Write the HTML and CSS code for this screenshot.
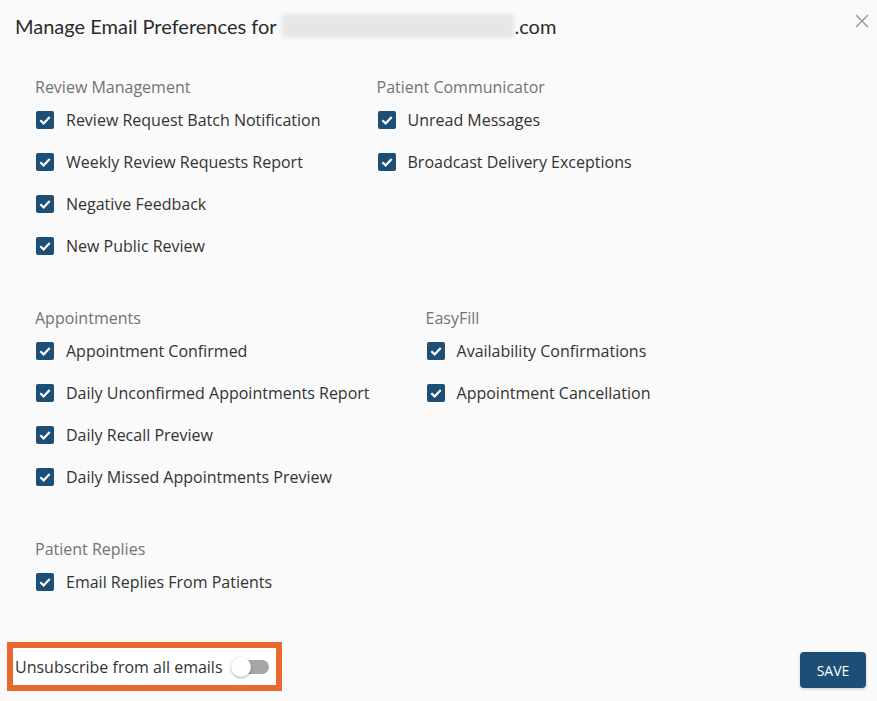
FILE: index.html
```html
<!DOCTYPE html>
<html>
<head>
<meta charset="utf-8">
<link rel="stylesheet" href="styles.css">
</head>
<body>
<div class="modal">
  <div class="modal-head">
    <h1 class="title">Manage Email Preferences for <span class="blur"></span>.com</h1>
    <button class="close" aria-label="Close">
      <svg width="16" height="16" viewBox="0 0 16 16"><path d="M2 2 L14 14 M14 2 L2 14" stroke="#9e9e9e" stroke-width="1.6" fill="none"/></svg>
    </button>
  </div>

  <div class="groups">
    <div class="row">
      <div class="group">
        <div class="group-title">Review Management</div>
        <label class="item"><span class="cb"><svg viewBox="0 0 18 18"><path d="M4.3 9.3 L7.6 12.4 L13.7 5.9" stroke="#fff" stroke-width="2.2" fill="none"/></svg></span>Review Request Batch Notification</label>
        <label class="item"><span class="cb"><svg viewBox="0 0 18 18"><path d="M4.3 9.3 L7.6 12.4 L13.7 5.9" stroke="#fff" stroke-width="2.2" fill="none"/></svg></span>Weekly Review Requests Report</label>
        <label class="item"><span class="cb"><svg viewBox="0 0 18 18"><path d="M4.3 9.3 L7.6 12.4 L13.7 5.9" stroke="#fff" stroke-width="2.2" fill="none"/></svg></span>Negative Feedback</label>
        <label class="item"><span class="cb"><svg viewBox="0 0 18 18"><path d="M4.3 9.3 L7.6 12.4 L13.7 5.9" stroke="#fff" stroke-width="2.2" fill="none"/></svg></span>New Public Review</label>
      </div>
      <div class="group">
        <div class="group-title">Patient Communicator</div>
        <label class="item"><span class="cb"><svg viewBox="0 0 18 18"><path d="M4.3 9.3 L7.6 12.4 L13.7 5.9" stroke="#fff" stroke-width="2.2" fill="none"/></svg></span>Unread Messages</label>
        <label class="item"><span class="cb"><svg viewBox="0 0 18 18"><path d="M4.3 9.3 L7.6 12.4 L13.7 5.9" stroke="#fff" stroke-width="2.2" fill="none"/></svg></span>Broadcast Delivery Exceptions</label>
      </div>
    </div>

    <div class="row">
      <div class="group">
        <div class="group-title">Appointments</div>
        <label class="item"><span class="cb"><svg viewBox="0 0 18 18"><path d="M4.3 9.3 L7.6 12.4 L13.7 5.9" stroke="#fff" stroke-width="2.2" fill="none"/></svg></span>Appointment Confirmed</label>
        <label class="item"><span class="cb"><svg viewBox="0 0 18 18"><path d="M4.3 9.3 L7.6 12.4 L13.7 5.9" stroke="#fff" stroke-width="2.2" fill="none"/></svg></span>Daily Unconfirmed Appointments Report</label>
        <label class="item"><span class="cb"><svg viewBox="0 0 18 18"><path d="M4.3 9.3 L7.6 12.4 L13.7 5.9" stroke="#fff" stroke-width="2.2" fill="none"/></svg></span>Daily Recall Preview</label>
        <label class="item"><span class="cb"><svg viewBox="0 0 18 18"><path d="M4.3 9.3 L7.6 12.4 L13.7 5.9" stroke="#fff" stroke-width="2.2" fill="none"/></svg></span>Daily Missed Appointments Preview</label>
      </div>
      <div class="group">
        <div class="group-title">EasyFill</div>
        <label class="item"><span class="cb"><svg viewBox="0 0 18 18"><path d="M4.3 9.3 L7.6 12.4 L13.7 5.9" stroke="#fff" stroke-width="2.2" fill="none"/></svg></span>Availability Confirmations</label>
        <label class="item"><span class="cb"><svg viewBox="0 0 18 18"><path d="M4.3 9.3 L7.6 12.4 L13.7 5.9" stroke="#fff" stroke-width="2.2" fill="none"/></svg></span>Appointment Cancellation</label>
      </div>
    </div>

    <div class="row">
      <div class="group">
        <div class="group-title">Patient Replies</div>
        <label class="item"><span class="cb"><svg viewBox="0 0 18 18"><path d="M4.3 9.3 L7.6 12.4 L13.7 5.9" stroke="#fff" stroke-width="2.2" fill="none"/></svg></span>Email Replies From Patients</label>
      </div>
    </div>
  </div>

  <div class="footer">
    <div class="unsub">
      <span>Unsubscribe from all emails</span>
      <span class="toggle"><span class="track"></span><span class="thumb"></span></span>
    </div>
    <button class="save">SAVE</button>
  </div>
</div>
</body>
</html>
```
FILE: styles.css
```css
* { box-sizing: border-box; }
html, body { margin: 0; padding: 0; }
body {
  background: #fafafa;
  font-family: "Open Sans", "Noto Sans", sans-serif;
  color: #333;
  width: 877px;
  height: 701px;
  overflow: hidden;
}
.modal {
  position: relative;
  height: 701px;
}
.modal-head {
  display: flex;
  justify-content: space-between;
  align-items: flex-start;
  padding: 13px 7px 0 15px;
  height: 76px;
}
.title {
  margin: 0;
  font-family: "Lato", sans-serif;
  font-weight: 400;
  font-size: 20px;
  line-height: 26px;
  color: #2b2b2b;
  display: flex;
  align-items: center;
}
.blur {
  display: inline-block;
  width: 232px;
  height: 24px;
  margin-left: 5px;
  margin-right: 1px;
  background: #e6e6e6;
  filter: blur(2px);
  border-radius: 3px;
}
.close {
  border: 0;
  background: transparent;
  padding: 0;
  margin-top: 0;
  width: 16px;
  height: 16px;
  cursor: pointer;
}
.groups {
  padding-left: 35px;
}
.row {
  display: flex;
  gap: 56px;
  margin-bottom: 40px;
}
.group {
  display: flex;
  flex-direction: column;
}
.group-title {
  font-size: 16px;
  line-height: 22px;
  color: #737373;
  margin-bottom: 1px;
}
.item {
  display: flex;
  align-items: center;
  height: 42px;
  font-size: 16px;
  color: #333;
  white-space: nowrap;
}
.cb {
  width: 18px;
  height: 18px;
  border-radius: 2px;
  background: #1d4f76;
  margin-left: 1px;
  margin-right: 12px;
  display: inline-flex;
}
.cb svg { width: 18px; height: 18px; }
.footer {
  position: absolute;
  left: 7px;
  right: 11px;
  bottom: 10px;
  display: flex;
  justify-content: space-between;
  align-items: flex-end;
}
.unsub {
  display: flex;
  align-items: center;
  border: 6px solid #e8682f;
  background: #fff;
  height: 49px;
  padding: 0 7px 0 2px;
  font-size: 16px;
  color: #333;
}
.toggle {
  position: relative;
  width: 38px;
  height: 20px;
  margin-left: 8px;
  display: inline-block;
}
.track {
  position: absolute;
  left: 2px;
  top: 3px;
  width: 36px;
  height: 14px;
  border-radius: 7px;
  background: #a6a6a6;
}
.thumb {
  position: absolute;
  left: 0;
  top: 0;
  width: 20px;
  height: 20px;
  border-radius: 50%;
  background: #fff;
  box-shadow: 0 1px 3px rgba(0,0,0,0.35);
}
.save {
  width: 66px;
  height: 36px;
  border: 0;
  border-radius: 4px;
  background: #1d4f76;
  color: #fff;
  font-family: "Open Sans", sans-serif;
  font-size: 14px;
  font-weight: 400;
  margin-bottom: 3px;
  box-shadow: 0 1px 3px rgba(0,0,0,0.2);
}
```
